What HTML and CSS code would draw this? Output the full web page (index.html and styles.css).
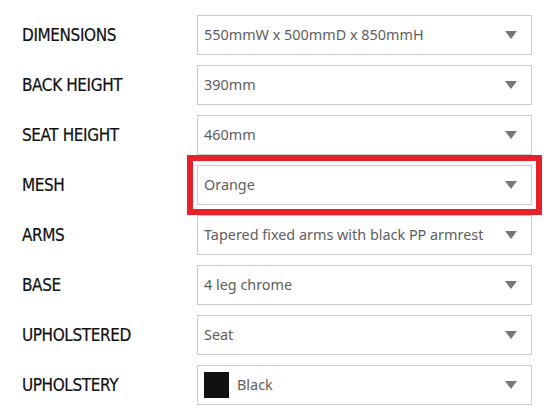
FILE: index.html
```html
<!DOCTYPE html>
<html>
<head>
<meta charset="utf-8">
<link rel="stylesheet" href="styles.css">
</head>
<body>
<div class="options">
  <div class="row">
    <div class="label">DIMENSIONS</div>
    <div class="select"><span class="value">550mmW x 500mmD x 850mmH</span><span class="arrow"></span></div>
  </div>
  <div class="row">
    <div class="label">BACK HEIGHT</div>
    <div class="select"><span class="value">390mm</span><span class="arrow"></span></div>
  </div>
  <div class="row">
    <div class="label">SEAT HEIGHT</div>
    <div class="select"><span class="value">460mm</span><span class="arrow"></span></div>
  </div>
  <div class="row">
    <div class="label">MESH</div>
    <div class="select highlighted"><span class="value">Orange</span><span class="arrow"></span></div>
  </div>
  <div class="row">
    <div class="label">ARMS</div>
    <div class="select"><span class="value">Tapered fixed arms with black PP armrest</span><span class="arrow"></span></div>
  </div>
  <div class="row">
    <div class="label">BASE</div>
    <div class="select"><span class="value">4 leg chrome</span><span class="arrow"></span></div>
  </div>
  <div class="row">
    <div class="label">UPHOLSTERED</div>
    <div class="select"><span class="value">Seat</span><span class="arrow"></span></div>
  </div>
  <div class="row">
    <div class="label">UPHOLSTERY</div>
    <div class="select"><span class="swatch"></span><span class="value">Black</span><span class="arrow"></span></div>
  </div>
</div>
</body>
</html>
```
FILE: styles.css
```css
html, body {
  margin: 0;
  padding: 0;
  background: #ffffff;
}

.options {
  display: flex;
  flex-direction: column;
  gap: 10px;
  padding: 15px 0 0 22px;
}

.row {
  display: flex;
  align-items: center;
  height: 40px;
}

.label {
  width: 175px;
  font-family: "DejaVu Sans Condensed", "DejaVu Sans", sans-serif;
  font-stretch: condensed;
  font-size: 17px;
  letter-spacing: -0.4px;
  color: #111111;
  -webkit-text-stroke: 0.2px #111111;
}

.select {
  box-sizing: border-box;
  width: 335px;
  height: 40px;
  border: 1px solid #cccccc;
  display: flex;
  align-items: center;
  padding: 0 14px 2px 6px;
  font-family: "Noto Sans", "Open Sans", sans-serif;
  font-size: 14.4px;
  color: #5e5e5e;
}

.highlighted {
  outline: 6px solid #e8202a;
  outline-offset: 4px;
}

.value {
  white-space: nowrap;
}

.swatch {
  width: 25px;
  height: 26px;
  background: #111111;
  margin: 2px 8px 0 0;
}

.arrow {
  margin: 2px 0 0 auto;
  width: 0;
  height: 0;
  border-left: 6px solid transparent;
  border-right: 6px solid transparent;
  border-top: 8px solid #777777;
}
```
